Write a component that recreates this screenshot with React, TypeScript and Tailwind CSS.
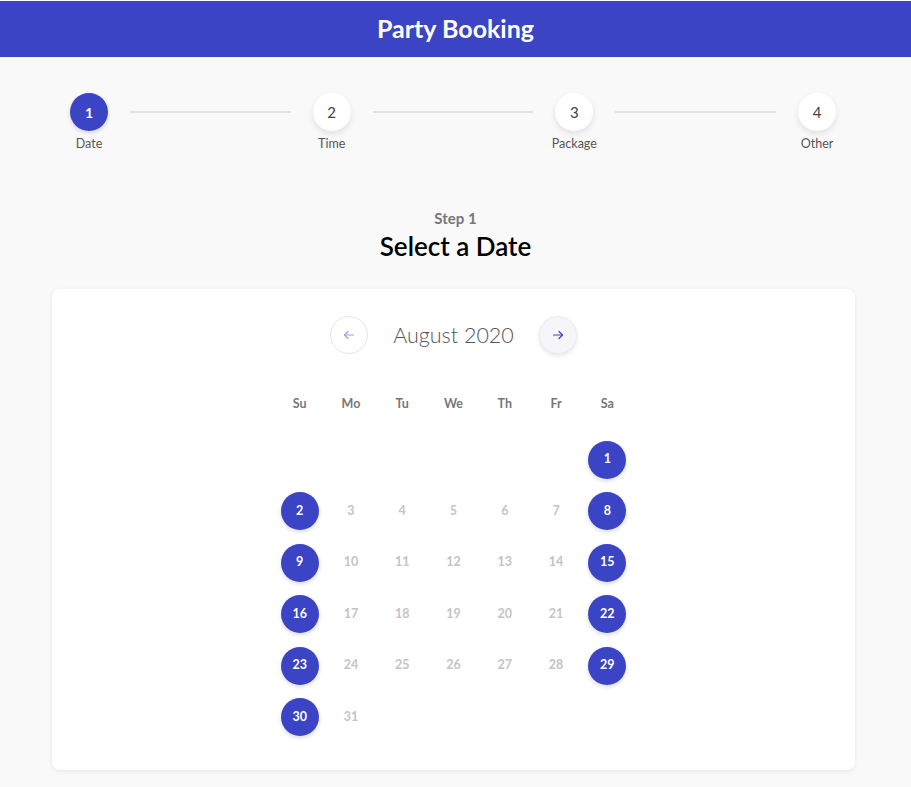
import React from "react";

const BLUE = "bg-[#3b44c4]";

function Arrow({ dir, className }: { dir: "left" | "right"; className: string }) {
  return (
    <svg width="12" height="12" viewBox="0 0 12 12" fill="none" stroke="currentColor" strokeWidth="1.2" strokeLinecap="round" strokeLinejoin="round" className={className}>
      {dir === "left" ? (
        <>
          <path d="M10.5 6H1.5" />
          <path d="M5 2.5L1.5 6L5 9.5" />
        </>
      ) : (
        <>
          <path d="M1.5 6H10.5" />
          <path d="M7 2.5L10.5 6L7 9.5" />
        </>
      )}
    </svg>
  );
}

const steps = ["Date", "Time", "Package", "Other"];

export default function App() {
  const days = ["Su", "Mo", "Tu", "We", "Th", "Fr", "Sa"];
  const cells: (number | null)[] = [null, null, null, null, null, null];
  for (let d = 1; d <= 31; d++) cells.push(d);
  const rows: (number | null)[][] = [];
  for (let i = 0; i < cells.length; i += 7) rows.push(cells.slice(i, i + 7));

  return (
    <div className="min-h-[787px] bg-[#f9f9f9] pb-4" style={{ fontFamily: "Lato, 'Noto Sans', sans-serif" }}>
      <div className="border-t border-white">
        <header className={`${BLUE} h-[56px] flex items-center justify-center`}>
          <h1 className="text-white text-[25px] font-bold">Party Booking</h1>
        </header>
      </div>

      <div className="flex items-start ml-[70px] mr-[75px] mt-[36px]">
        {steps.map((s, i) => (
          <React.Fragment key={s}>
            <div className="relative w-[38px] flex flex-col items-center">
              <div
                className={
                  i === 0
                    ? `${BLUE} w-[38px] h-[38px] rounded-full flex items-center justify-center text-white text-[14px] font-bold shadow-[0_2px_4px_rgba(0,0,0,0.15)]`
                    : "bg-white w-[38px] h-[38px] rounded-full flex items-center justify-center text-[#444] text-[15px] shadow-[0_3px_6px_rgba(0,0,0,0.1)]"
                }
              >
                {i + 1}
              </div>
              <div className="mt-[4px] text-[12.5px] text-[#555] whitespace-nowrap">{s}</div>
            </div>
            {i < steps.length - 1 && <div className="flex-1 h-[2px] bg-[#e2e2e2] mx-[22px] mt-[18px]" />}
          </React.Fragment>
        ))}
      </div>

      <div className="mt-[55px] flex flex-col items-center">
        <div className="text-[15px] font-bold text-[#777] leading-[18px]">Step 1</div>
        <div className="text-[26px] text-black leading-[32px] mt-[3px] font-semibold">Select a Date</div>
      </div>

      <div className="mx-[52px] w-[803px] mt-[27px] bg-white rounded-[8px] shadow-[0_1px_4px_rgba(0,0,0,0.08)] pt-[27px] pb-[34px] flex flex-col items-center">
        <div className="flex items-center gap-[24px]">
          <button className="w-[38px] h-[38px] rounded-full border border-[#e6e6e6] bg-white flex items-center justify-center">
            <Arrow dir="left" className="text-[#9ba0e0]" />
          </button>
          <div className="text-[21.5px] text-[#555] font-light w-[123px] text-center whitespace-nowrap">August 2020</div>
          <button className="w-[38px] h-[38px] rounded-full border border-[#ececec] bg-[#f6f6fa] flex items-center justify-center shadow-[0_2px_4px_rgba(0,0,0,0.1)]">
            <Arrow dir="right" className="text-[#3b44c4]" />
          </button>
        </div>

        <div className="mt-[36px] w-[359px]">
          <div className="grid grid-cols-7 h-[30px] items-center">
            {days.map((d) => (
              <div key={d} className="text-center text-[12.5px] font-bold text-[#777]">
                {d}
              </div>
            ))}
          </div>
          <div className="mt-[21px] flex flex-col gap-[13.5px]">
            {rows.map((r, ri) => (
              <div key={ri} className="grid grid-cols-7">
                {Array.from({ length: 7 }).map((_, ci) => {
                  const d = r[ci];
                  const active = d != null && (ci === 0 || ci === 6);
                  return (
                    <div key={ci} className="flex justify-center h-[38px] items-center">
                      {d != null &&
                        (active ? (
                          <div className={`${BLUE} w-[38px] h-[38px] rounded-full flex items-center justify-center text-white text-[12.5px] font-bold shadow-[0_2px_4px_rgba(0,0,0,0.15)]`}>
                            {d}
                          </div>
                        ) : (
                          <div className="text-[12.5px] font-bold text-[#c4c4c4]">{d}</div>
                        ))}
                    </div>
                  );
                })}
              </div>
            ))}
          </div>
        </div>
      </div>
    </div>
  );
}
